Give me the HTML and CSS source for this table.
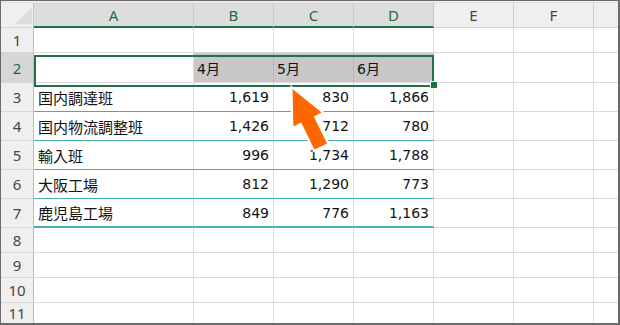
FILE: index.html
```html
<!DOCTYPE html>
<html lang="ja">
<head>
  <meta charset="UTF-8" />
  <title>月別集計</title>
  <link rel="stylesheet" href="styles.css">
</head>
<body>
  <div class="sheet">
    <div class="strip"></div>
    <div class="grid">
      <!-- column headers -->
      <div class="corner"></div>
      <div class="hd sel">A</div>
      <div class="hd sel">B</div>
      <div class="hd sel">C</div>
      <div class="hd sel">D</div>
      <div class="hd">E</div>
      <div class="hd">F</div>
      <div class="hd end"></div>

      <!-- row 1 -->
      <div class="rh">1</div>
      <div class="c"></div><div class="c"></div><div class="c"></div><div class="c"></div>
      <div class="c"></div><div class="c"></div><div class="c end"></div>

      <!-- row 2 -->
      <div class="rh sel">2</div>
      <div class="c"></div>
      <div class="c fill">4月</div>
      <div class="c fill">5月</div>
      <div class="c fill">6月</div>
      <div class="c"></div><div class="c"></div><div class="c end"></div>

      <!-- row 3 -->
      <div class="rh">3</div>
      <div class="c txt tb">国内調達班</div>
      <div class="c num tb">1,619</div>
      <div class="c num tb">830</div>
      <div class="c num tb">1,866</div>
      <div class="c"></div><div class="c"></div><div class="c end"></div>

      <!-- row 4 -->
      <div class="rh">4</div>
      <div class="c txt tb">国内物流調整班</div>
      <div class="c num tb">1,426</div>
      <div class="c num tb">712</div>
      <div class="c num tb">780</div>
      <div class="c"></div><div class="c"></div><div class="c end"></div>

      <!-- row 5 -->
      <div class="rh">5</div>
      <div class="c txt tb">輸入班</div>
      <div class="c num tb">996</div>
      <div class="c num tb">1,734</div>
      <div class="c num tb">1,788</div>
      <div class="c"></div><div class="c"></div><div class="c end"></div>

      <!-- row 6 -->
      <div class="rh">6</div>
      <div class="c txt tb">大阪工場</div>
      <div class="c num tb">812</div>
      <div class="c num tb">1,290</div>
      <div class="c num tb">773</div>
      <div class="c"></div><div class="c"></div><div class="c end"></div>

      <!-- row 7 -->
      <div class="rh">7</div>
      <div class="c txt tb2">鹿児島工場</div>
      <div class="c num tb2">849</div>
      <div class="c num tb2">776</div>
      <div class="c num tb2">1,163</div>
      <div class="c"></div><div class="c"></div><div class="c end"></div>

      <!-- rows 8-11 -->
      <div class="rh">8</div>
      <div class="c"></div><div class="c"></div><div class="c"></div><div class="c"></div>
      <div class="c"></div><div class="c"></div><div class="c end"></div>
      <div class="rh">9</div>
      <div class="c"></div><div class="c"></div><div class="c"></div><div class="c"></div>
      <div class="c"></div><div class="c"></div><div class="c end"></div>
      <div class="rh">10</div>
      <div class="c"></div><div class="c"></div><div class="c"></div><div class="c"></div>
      <div class="c"></div><div class="c"></div><div class="c end"></div>
      <div class="rh last">11</div>
      <div class="c last"></div><div class="c last"></div><div class="c last"></div><div class="c last"></div>
      <div class="c last"></div><div class="c last"></div><div class="c end last"></div>
    </div>

    <!-- selection A2:D2 -->
    <div class="selection"></div>
    <div class="handle"></div>

    <svg class="arrow" width="60" height="80" viewBox="0 0 60 80">
      <polygon points="12.5,9 41.6,32.6 33.8,36.4 47,63.4 34.4,69.6 21.2,42.6 13.4,46.4" />
    </svg>
  </div>
</body>
</html>
```

FILE: styles.css
```css
* {
  box-sizing: border-box;
}

body {
  margin: 0;
  background: #fff;
}

.sheet {
  position: relative;
  width: 620px;
  height: 325px;
  border: 1px solid #6a6a6a;
  border-right-width: 2px;
  border-bottom-width: 2px;
  display: flex;
  flex-direction: column;
  overflow: hidden;
  background: #fff;
}

.strip {
  height: 5px;
  background: #efefef;
  border-bottom: 1px solid #e2e2e2;
}

.grid {
  flex: 1;
  display: grid;
  grid-template-columns: 33px 160px repeat(5, 80px) 1fr;
  grid-template-rows: 25px 25px 30px repeat(5, 29px) repeat(3, 25px) 1fr;
}

.grid > div {
  display: flex;
  align-items: center;
  min-width: 0;
  overflow: hidden;
  white-space: nowrap;
  border-right: 1px solid #dadada;
  border-bottom: 1px solid #dadada;
}

/* headers */
.corner {
  background: linear-gradient(to bottom right, transparent 50%, #dcdcdc 50%) no-repeat right 1px bottom 3px / 17px 17px, #efefef;
  border-right-color: #c4c4c4 !important;
  border-bottom-color: #d4d4d4 !important;
}

.hd {
  justify-content: center;
  background: #efefef;
  border-right-color: #d2d2d2 !important;
  border-bottom-color: #d4d4d4 !important;
  font: 15px "Noto Sans", sans-serif;
  color: #454545;
}

.hd.sel {
  background: #dddddd;
  color: #1e6b40;
  border-right-color: #c6c6c6 !important;
  border-bottom: 2px solid #217346 !important;
}

.rh {
  justify-content: center;
  background: #efefef;
  border-right-color: #bdbdbd !important;
  border-bottom-color: #d8d8d8 !important;
  font: 15px "Noto Sans", sans-serif;
  color: #454545;
}

.rh.sel {
  background: #d6d6d6;
  color: #1e6b40;
}

/* cells */
.c {
  font: 14px "DejaVu Sans", "Noto Sans CJK JP", sans-serif;
  color: #111;
}

.txt {
  padding-left: 4px;
  font: 15px "Noto Sans CJK JP", sans-serif;
}

.num {
  justify-content: flex-end;
  padding-right: 4px;
}

.fill {
  background: #c8c8c8;
  border-right-color: #b6b6b6 !important;
  padding-left: 3px;
}

.tb {
  border-bottom-color: #4aadad !important;
}

.tb2 {
  border-bottom: 2px solid #4aadad !important;
}

.grid > .end {
  border-right: none;
}

.grid > .last {
  border-bottom: none;
}

/* selection overlay */
.selection {
  position: absolute;
  left: 33px;
  top: 54px;
  width: 400px;
  height: 32px;
  border: 2px solid #217346;
}

.handle {
  position: absolute;
  left: 429px;
  top: 80px;
  width: 8px;
  height: 8px;
  background: #217346;
  border: 1px solid #fff;
}

.arrow {
  position: absolute;
  left: 279px;
  top: 79px;
}

.arrow polygon {
  fill: #ff6600;
  stroke: #fff;
  stroke-width: 4;
  stroke-linejoin: miter;
  paint-order: stroke;
}
```
